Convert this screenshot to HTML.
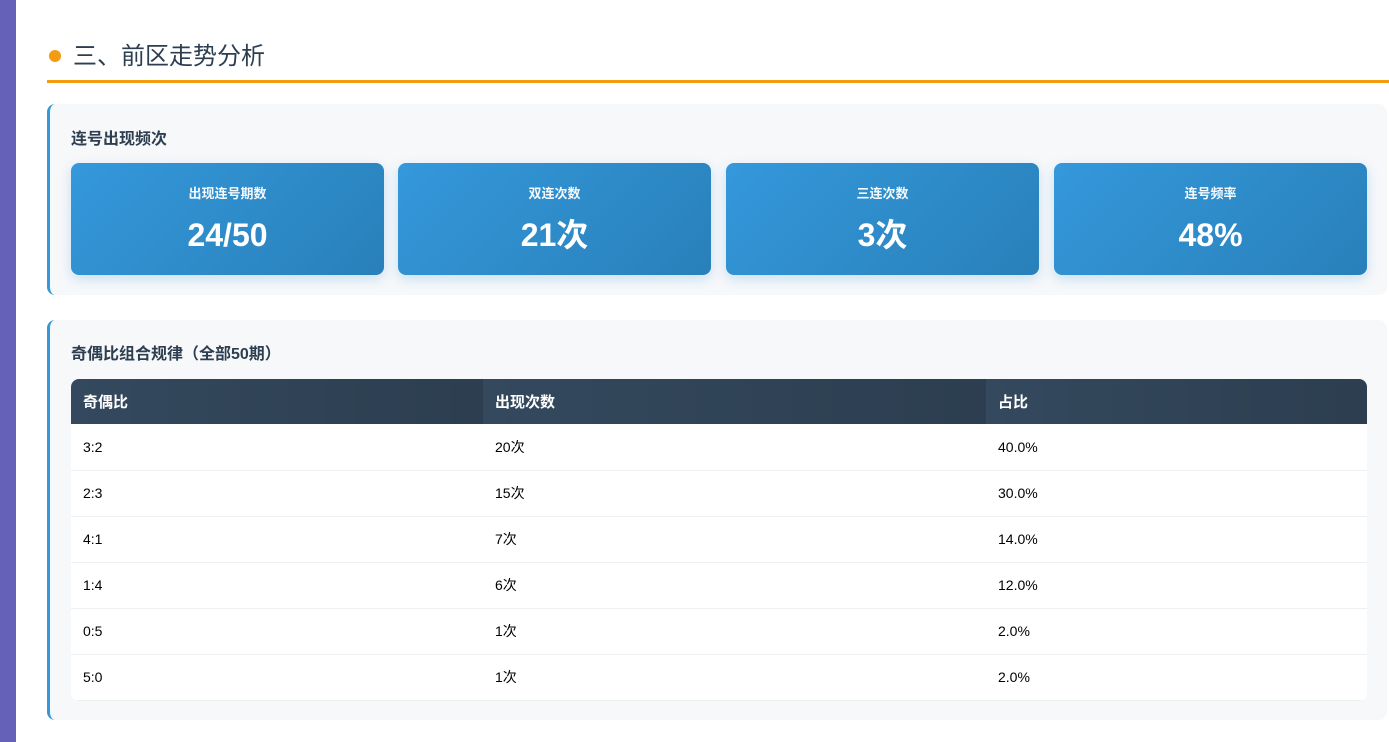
<!DOCTYPE html><html><head><meta charset="utf-8"><style>
*{margin:0;padding:0;box-sizing:border-box}
body{width:1389px;height:742px;overflow:hidden;background:#fff;font-family:"Liberation Sans","Noto Sans CJK SC",sans-serif;position:relative}
.strip{position:absolute;left:0;top:0;width:16px;height:742px;background:#6561b8}
.h2{position:absolute;left:47px;top:38px;width:1342px;height:45px;border-bottom:3px solid #f39c12;font-size:24px;color:#2c3e50;padding-left:26px;line-height:37px}
.h2:before{content:"";position:absolute;left:2px;top:12px;width:12px;height:12px;border-radius:50%;background:#f39c12}
.card{position:absolute;left:47px;width:1340px;background:#f7f8fa;border-left:3px solid #3498db;border-radius:8px}
.card h3{position:absolute;left:21px;font-size:16px;line-height:20px;font-weight:bold;color:#2c3e50}
.stat{position:absolute;top:59px;width:313px;height:112px;border-radius:8px;background:linear-gradient(135deg,#3498db,#2980b9);color:#fff;text-align:center;box-shadow:0 4px 12px rgba(52,152,219,.25)}
.stat .l{position:absolute;left:0;right:0;top:22px;line-height:18px;font-size:13px;font-weight:bold;opacity:.95}
.stat .v{position:absolute;left:0;right:0;top:52px;line-height:40px;font-size:32px;font-weight:bold}
table{position:absolute;left:21px;top:59px;width:1296px;border-collapse:collapse;font-size:14px;border-radius:8px;overflow:hidden;background:#fff}
th{background:linear-gradient(90deg,#34495e,#2c3e50);color:#fff;text-align:left;height:45px;padding-left:12px;font-size:15px}
td{height:46px;padding-left:12px;border-bottom:1px solid #ecf0f1;color:#000}
</style></head><body>
<div class="strip"></div>
<div class="h2">三、前区走势分析</div>
<div class="card" style="top:104px;height:191px">
<h3 style="top:26px">连号出现频次</h3>
<div class="stat" style="left:21px"><div class="l">出现连号期数</div><div class="v">24/50</div></div>
<div class="stat" style="left:348px"><div class="l">双连次数</div><div class="v">21次</div></div>
<div class="stat" style="left:676px"><div class="l">三连次数</div><div class="v">3次</div></div>
<div class="stat" style="left:1004px"><div class="l">连号频率</div><div class="v">48%</div></div>
</div>
<div class="card" style="top:320px;height:400px">
<h3 style="top:25px">奇偶比组合规律（全部50期）</h3>
<table>
<tr><th style="width:412px">奇偶比</th><th style="width:503px">出现次数</th><th>占比</th></tr>
<tr><td>3:2</td><td>20次</td><td>40.0%</td></tr>
<tr><td>2:3</td><td>15次</td><td>30.0%</td></tr>
<tr><td>4:1</td><td>7次</td><td>14.0%</td></tr>
<tr><td>1:4</td><td>6次</td><td>12.0%</td></tr>
<tr><td>0:5</td><td>1次</td><td>2.0%</td></tr>
<tr><td>5:0</td><td>1次</td><td>2.0%</td></tr>
</table>
</div>
</body></html>
